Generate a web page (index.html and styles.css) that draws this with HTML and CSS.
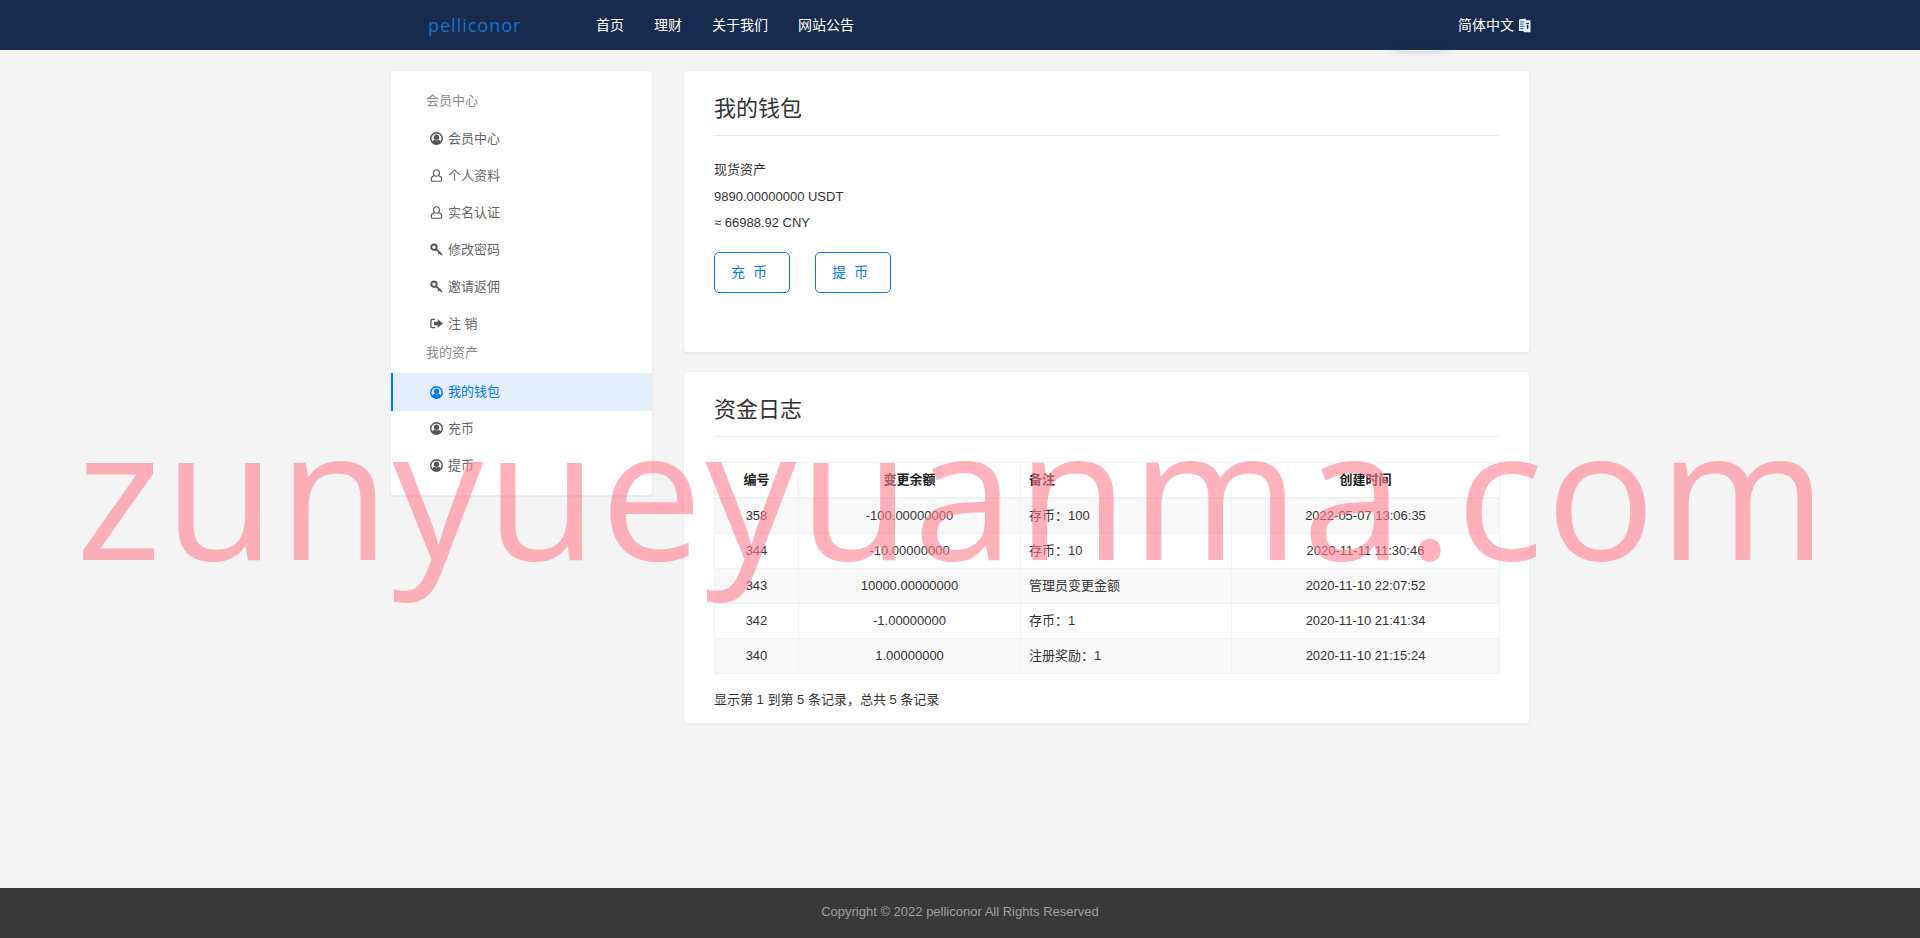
FILE: index.html
```html
<!DOCTYPE html>
<html lang="zh-CN">
<head>
<meta charset="utf-8">
<title>我的钱包 - pelliconor</title>
<link rel="stylesheet" href="styles.css">
</head>
<body>
<svg class="sprite" aria-hidden="true">
  <symbol id="i-circle" viewBox="0 0 13 13"><path fill-rule="evenodd" d="M6.500 0a6.500 6.500 0 1 1 0 13 6.500 6.500 0 0 1 0-13zm0 1.400a5.100 5.100 0 0 0-4.100 8.100c.5-1 1.400-1.500 2.400-1.700.5.400 1.100.6 1.700.6s1.200-.2 1.700-.6c1 .2 1.900.7 2.400 1.700a5.100 5.100 0 0 0-4.100-8.100zm0 1.100a2.700 2.700 0 1 1 0 5.400 2.700 2.700 0 0 1 0-5.400z"/></symbol>
  <symbol id="i-user" viewBox="0 0 13 13"><path fill="none" stroke="currentColor" stroke-width="1.100" d="M6.500.7a2.900 2.900 0 0 1 2.900 2.900v.8a2.900 2.900 0 0 1-5.800 0v-.8A2.900 2.900 0 0 1 6.500.7zM4.300 6.700C2.500 7.100 1.300 8.100 1.300 10v.9c0 .8.500 1.400 1.300 1.400h7.800c.8 0 1.300-.6 1.300-1.400V10c0-1.900-1.200-2.900-3-3.300"/></symbol>
  <symbol id="i-key" viewBox="0 0 13 13"><g fill="none" stroke="currentColor"><circle cx="4" cy="4.200" r="2.700" stroke-width="1.900"/><path stroke-width="1.800" d="M6 6.200l6 5.600"/><path stroke-width="1.500" d="M9.600 9.500 8.200 10.900"/></g></symbol>
  <symbol id="i-out" viewBox="0 0 13 13"><path d="M5 1.700v1.300H2.500c-.5 0-.9.400-.9.900v5.200c0 .5.400.9.900.9H5v1.300H2.400C1 11.300.3 10.500.3 9.300V3.700c0-1.200.7-2 2.100-2z"/><path d="M7.700 2.300 12.900 6.500 7.700 10.700V8.300H4V4.700h3.700z"/></symbol>
</svg>

<header class="topbar">
  <div class="topbar-inner">
    <div class="topbar-left">
      <a class="logo">pelliconor</a>
      <nav class="nav">
        <a>首页</a>
        <a>理财</a>
        <a>关于我们</a>
        <a>网站公告</a>
      </nav>
    </div>
    <div class="lang">
      <span>简体中文</span>
      <svg class="lang-icon" viewBox="0 0 13 15"><path fill="#e8eef5" d="M1 1.500 7.500.5l.7 1.700H12.500v12H6l-.6-1.200H1z"/><path fill="#4f74a3" d="M2.200 3.200h4.300v1.200H2.200zm0 2.300h3.400v1.200H2.200zm0 2.300h4.300V9H2.200zm0 2.300h3.400v1.200H2.200z"/><path fill="#182b4e" d="M8 5h3v1H8zm.8 1.800h1.500v4H8.800z"/></svg>
    </div>
  </div>
</header>
<div class="header-shadow"></div>

<main class="layout">
  <aside class="card side">
    <div class="side-title">会员中心</div>
    <a class="side-item"><svg class="ico"><use href="#i-circle"/></svg>会员中心</a>
    <a class="side-item"><svg class="ico"><use href="#i-user"/></svg>个人资料</a>
    <a class="side-item"><svg class="ico"><use href="#i-user"/></svg>实名认证</a>
    <a class="side-item"><svg class="ico"><use href="#i-key"/></svg>修改密码</a>
    <a class="side-item"><svg class="ico"><use href="#i-key"/></svg>邀请返佣</a>
    <a class="side-item"><svg class="ico"><use href="#i-out"/></svg>注 销</a>
    <div class="side-title side-title-2">我的资产</div>
    <a class="side-item active"><svg class="ico"><use href="#i-circle"/></svg>我的钱包</a>
    <a class="side-item"><svg class="ico"><use href="#i-circle"/></svg>充币</a>
    <a class="side-item"><svg class="ico"><use href="#i-circle"/></svg>提币</a>
  </aside>

  <div class="content">
    <section class="card panel wallet">
      <h2 class="panel-title">我的钱包</h2>
      <div class="assets">
        <p>现货资产</p>
        <p>9890.00000000 USDT</p>
        <p>≈ 66988.92 CNY</p>
      </div>
      <div class="actions">
        <a class="btn">充 币</a>
        <a class="btn">提 币</a>
      </div>
    </section>

    <section class="card panel log">
      <h2 class="panel-title">资金日志</h2>
      <table class="table">
        <colgroup>
          <col class="c1"><col class="c2"><col class="c3"><col class="c4">
        </colgroup>
        <thead>
          <tr><th>编号</th><th>变更余额</th><th class="left">备注</th><th>创建时间</th></tr>
        </thead>
        <tbody>
          <tr><td>358</td><td>-100.00000000</td><td class="left">存币：100</td><td>2022-05-07 13:06:35</td></tr>
          <tr><td>344</td><td>-10.00000000</td><td class="left">存币：10</td><td>2020-11-11 11:30:46</td></tr>
          <tr><td>343</td><td>10000.00000000</td><td class="left">管理员变更金额</td><td>2020-11-10 22:07:52</td></tr>
          <tr><td>342</td><td>-1.00000000</td><td class="left">存币：1</td><td>2020-11-10 21:41:34</td></tr>
          <tr><td>340</td><td>1.00000000</td><td class="left">注册奖励：1</td><td>2020-11-10 21:15:24</td></tr>
        </tbody>
      </table>
      <p class="summary">显示第 1 到第 5 条记录，总共 5 条记录</p>
    </section>
  </div>
</main>

<footer class="footer">Copyright © 2022 pelliconor All Rights Reserved</footer>

<div class="watermark">zunyueyuanma.com</div>
</body>
</html>
```
FILE: styles.css
```css
* { box-sizing: border-box; }
html, body { height: 100%; }
body {
  margin: 0;
  min-height: 100vh;
  display: flex;
  flex-direction: column;
  background: #f4f4f4;
  color: #333;
  font: 13px/1.5 "Liberation Sans", "Noto Sans CJK SC", sans-serif;
  overflow: hidden;
}
.sprite { display: none; }
a { color: inherit; text-decoration: none; }

.topbar { height: 50px; background: #182b4e; flex: none; }
.topbar-inner {
  width: 1142px;
  height: 100%;
  margin: 0 auto;
  padding-left: 39px;
  display: flex;
  justify-content: space-between;
  align-items: center;
}
.topbar-left { display: flex; align-items: center; }
.logo {
  width: 168px;
  color: #1a70cc;
  font: 18px/1 "Open Sans", sans-serif;
  letter-spacing: 1px;
}
.nav { display: flex; gap: 30px; font-size: 14px; color: #fff; }
.lang { display: flex; align-items: center; gap: 4px; color: #fff; font-size: 14px; }
.lang-icon { width: 13px; height: 15px; }
.header-shadow {
  position: absolute;
  left: 1390px;
  top: 46px;
  width: 60px;
  height: 5px;
  border-radius: 50%;
  box-shadow: 0 2px 5px rgba(24, 43, 78, .16);
}

.layout {
  flex: 1;
  width: 1140px;
  margin: 20px auto 0;
  display: grid;
  grid-template-columns: 263px 847px;
  column-gap: 30px;
  align-items: start;
}
.card {
  background: #fff;
  border: 1px solid #e9eef6;
  border-radius: 4px;
  box-shadow: 0 1px 1px #e3e9f1;
}
.side { height: 426px; padding-top: 18px; color: #666; }
.side-title { height: 24px; line-height: 24px; padding-left: 35px; color: #8c8c8c; }
.side-title-2 { height: 20px; line-height: 20px; margin-top: 1px; margin-bottom: 10px; }
.side-item {
  height: 37px;
  display: flex;
  align-items: center;
  gap: 5px;
  padding-left: 39px;
}
.side-title + .side-item { margin-top: 7px; }
.side-title-2 + .side-item { margin-top: 0; }
.ico { width: 13px; height: 13px; fill: currentColor; color: #555; flex: none; }
.side-item.active {
  height: 38px;
  margin-bottom: -1px;
  padding-left: 37px;
  background: #e3effd;
  border-left: 2px solid #007bff;
  color: #007bff;
}
.active .ico { color: #007bff; }

.content { display: flex; flex-direction: column; gap: 18px; }
.panel { padding: 0 30px; }
.panel-title {
  margin: 0;
  height: 65px;
  padding-top: 20px;
  font-size: 22px;
  line-height: 36px;
  font-weight: 400;
  color: #333;
  border-bottom: 1px solid #e9ecef;
}
.wallet { height: 283px; }
.assets { margin-top: 21px; }
.assets p { margin: 0; height: 26.500px; line-height: 26.500px; }
.actions { display: flex; gap: 25px; margin-top: 15px; }
.btn {
  width: 76px;
  height: 41px;
  line-height: 39px;
  padding-left: 16px;
  border: 1px solid #007bff;
  border-radius: 5px;
  color: #007bff;
  font-size: 14px;
  word-spacing: 4px;
}

.log { height: 353px; }
.table {
  width: 785px;
  margin-top: 25px;
  table-layout: fixed;
  border-collapse: collapse;
}
.c1 { width: 84px; }
.c2 { width: 222px; }
.c3 { width: 211px; }
.c4 { width: 268px; }
.table th, .table td {
  height: 35px;
  padding: 0 8px;
  text-align: center;
  border: 1px solid #f0f1f2;
  color: #333;
}
.table tbody tr:first-child td { height: 36px; }
.table th { color: #222; font-weight: 700; border-bottom-width: 2px; }
.table .left { text-align: left; }
.table tbody tr:nth-child(odd) { background: #f8f8f8; }
.summary { margin: 16px 0 0; line-height: 20px; }

.footer {
  flex: none;
  height: 50px;
  line-height: 48px;
  background: #393939;
  color: #a0a0a0;
  text-align: center;
  font-size: 13px;
}

.watermark {
  position: absolute;
  left: 76px;
  top: 364px;
  line-height: 250px;
  font-family: "Open Sans", sans-serif;
  font-size: 182px;
  letter-spacing: 2.600px;
  white-space: nowrap;
  color: rgba(255, 127, 141, .6);
  pointer-events: none;
}
```
